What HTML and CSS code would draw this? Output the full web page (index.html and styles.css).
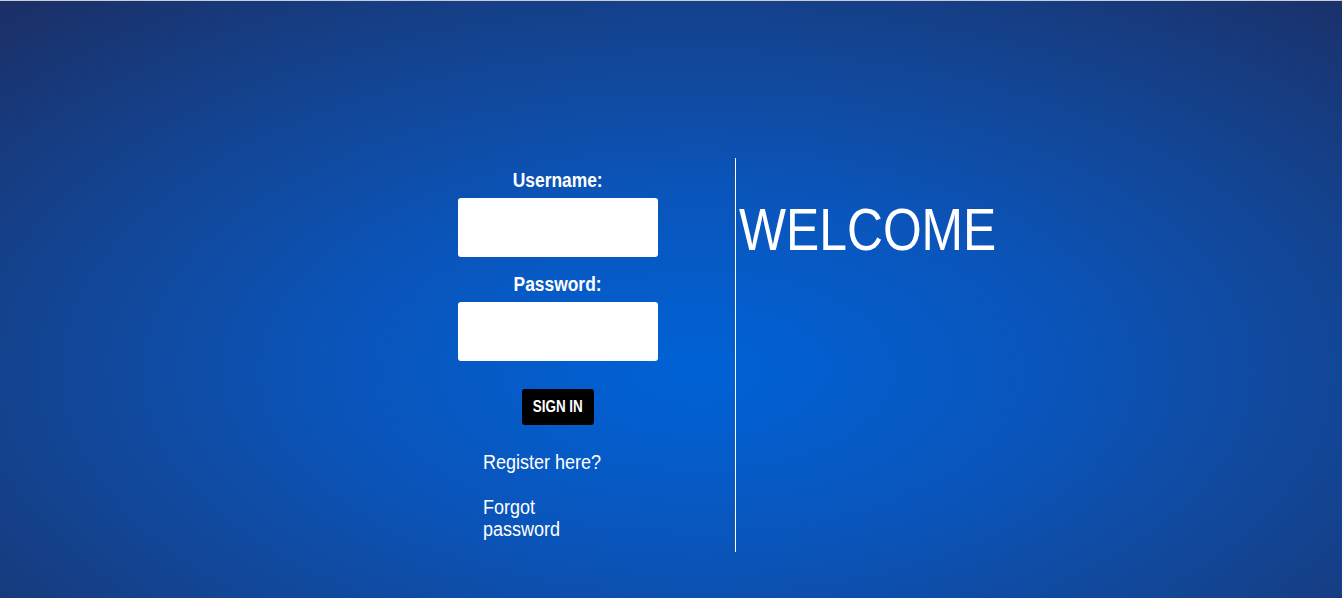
FILE: index.html
```html
<!DOCTYPE html>
<html lang="en">
<head>
<meta charset="utf-8">
<title>Login</title>
<link rel="stylesheet" href="styles.css">
</head>
<body>
<div class="page">
  <form class="login">
    <label class="field-label" for="username">Username:</label>
    <input class="field" id="username" type="text">
    <label class="field-label field-label--second" for="password">Password:</label>
    <input class="field" id="password" type="password">
    <button class="signin" type="button"><span class="signin-text">SIGN IN</span></button>
    <div class="links">
      <a class="link" href="#">Register here?</a>
      <a class="link" href="#">Forgot password</a>
    </div>
  </form>
  <section class="welcome">
    <h1 class="welcome-title">WELCOME</h1>
  </section>
</div>
</body>
</html>
```
FILE: styles.css
```css
html, body {
  margin: 0;
  height: 100%;
}
body {
  font-family: "Liberation Sans", Arial, sans-serif;
  color: #fff;
  border-top: 1px solid #c9cdd6;
  box-sizing: border-box;
  background: radial-gradient(ellipse 75% 85% at 52% 62%, #0062d6 0%, #0a55bb 35%, #134594 65%, #1b2f66 100%);
  overflow: hidden;
}
.page {
  display: flex;
  align-items: flex-start;
  padding-top: 157px;
  padding-left: 458px;
}
.login {
  width: 200px;
  margin-right: 77px;
  display: flex;
  flex-direction: column;
  align-items: center;
}
.field-label {
  display: inline-block;
  margin-top: 11px;
  font-size: 20px;
  font-weight: bold;
  line-height: 23px;
  transform: scaleX(0.87);
}
.field-label--second {
  margin-top: 16px;
}
.field {
  margin-top: 6px;
  width: 200px;
  height: 59px;
  box-sizing: border-box;
  border: none;
  border-radius: 3px;
  background: #fff;
  padding: 0 8px;
}
.signin {
  margin-top: 28px;
  width: 72px;
  height: 36px;
  background: #000;
  color: #fff;
  border: none;
  border-radius: 3px;
  font-family: inherit;
  font-weight: bold;
  font-size: 16px;
  padding: 0;
}
.signin-text {
  display: inline-block;
  transform: scaleX(0.84);
}
.links {
  align-self: flex-start;
  margin-left: 25px;
  margin-top: 26px;
  width: 140px;
  display: flex;
  flex-direction: column;
  gap: 23px;
}
.link {
  display: block;
  color: #fff;
  text-decoration: none;
  font-size: 20px;
  line-height: 22px;
  transform: scaleX(0.9);
  transform-origin: left top;
}
.welcome {
  border-left: 1px solid #fff;
  height: 394px;
  padding-left: 3px;
}
.welcome-title {
  display: inline-block;
  margin: 37px 0 0;
  font-size: 60px;
  font-weight: normal;
  line-height: 69px;
  transform: scaleX(0.83);
  transform-origin: left top;
}
```
